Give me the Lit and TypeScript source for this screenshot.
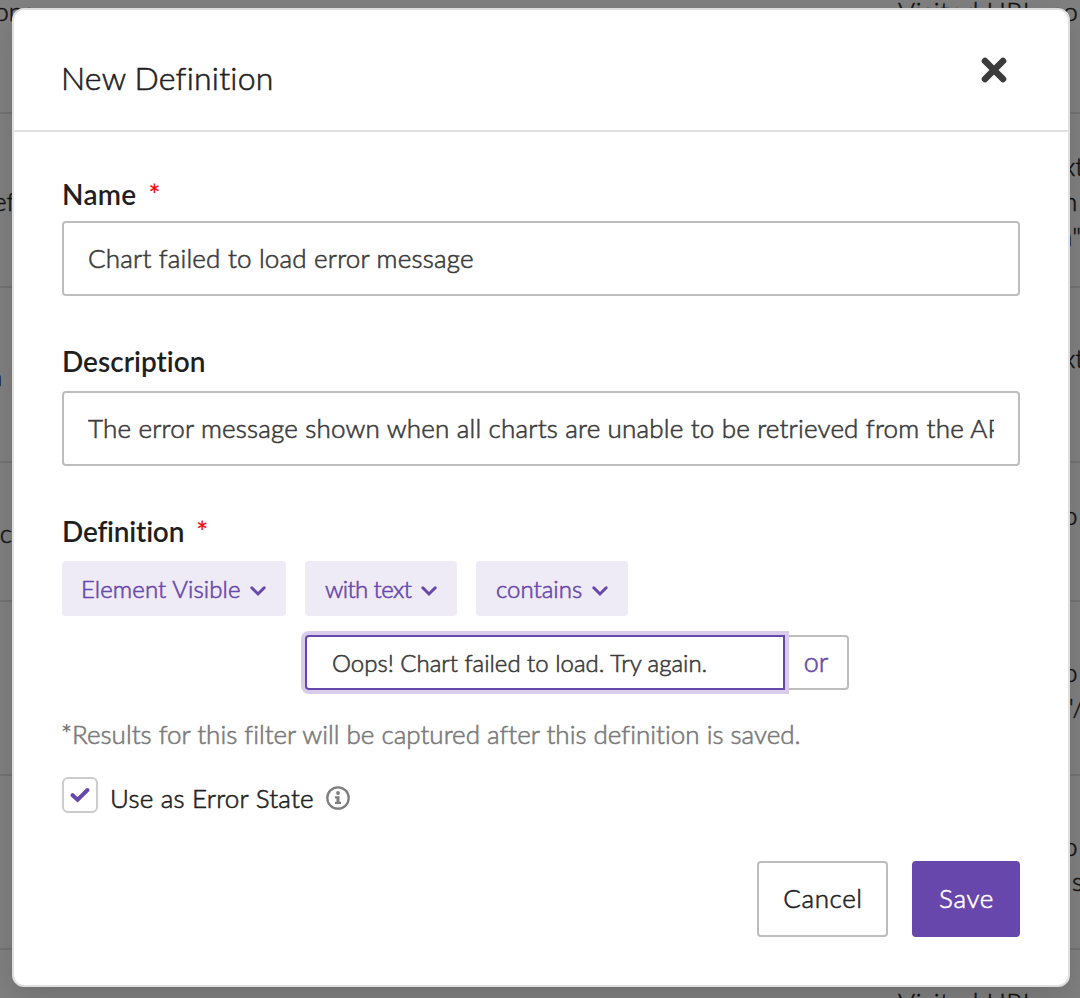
import { LitElement, html, css, svg, nothing } from "lit";
import { customElement, property } from "lit/decorators.js";

interface BackRow {
  size: string;
  left: string;
  right: string[];
}

const BACK_ROWS: BackRow[] = [
  { size: "first", left: "ons", right: ["Visited URL, co"] },
  { size: "tall", left: "ef", right: ["xt", "n", "n\""] },
  { size: "tall", left: "n", right: ["xt", ""] },
  { size: "short", left: "c", right: ["o", ""] },
  { size: "tall", left: "", right: ["o", "\"/"] },
  { size: "tall", left: "", right: ["o", "s"] },
  { size: "last", left: "", right: ["Visited URL"] },
];

const SHIFTS: Record<string, string> = {
  xt: "xt", ef: "ef", n: "n", c: "c", o: "o", "n\"": "quoted", "\"/": "slash", s: "s",
};

const chevron = svg`<path d="M1.8 1.8 8 8 14.2 1.8" />`;

@customElement("backdrop-table")
class BackdropTable extends LitElement {
  static styles = css`
    :host {
      display: block;
      height: 998px;
      overflow: hidden;
      background: #808080;
      color: #111;
      font: 300 26px/35px Lato, sans-serif;
      -webkit-text-stroke: 0.5px;
      white-space: nowrap;
    }
    .row {
      box-sizing: border-box;
      display: grid;
      grid-template-columns: 34px 1fr;
      align-items: center;
      padding-top: 3px;
      border-bottom: 2px solid #737373;
    }
    .first { height: 114px; align-items: start; padding-top: 0; line-height: 23px; }
    .tall { height: 174px; }
    .row:nth-child(3) { height: 175px; }
    .short { height: 139px; }
    .last { height: 60px; align-items: start; padding-top: 35px; border: 0; }
    .left { display: flex; justify-content: flex-end; }
    .right { padding-left: 1032px; }
    .right div { min-height: 35px; }
    .first .right div { min-height: 0; }
    .first .right, .last .right { padding-left: 864px; letter-spacing: 0.65px; }
    .tall .left { justify-content: flex-start; }
    .left .n { margin-left: -12px; }
    .ef { margin-left: -7px; }
    .c { margin-right: 22px; }
    .o, .right .n, .xt { margin-left: -3px; }
    .quoted { margin-left: -8px; }
    .slash { margin-left: -1px; }
    .s { margin-left: 6px; }
  `;

  render() {
    return BACK_ROWS.map(
      (r) => html`
        <div class="row ${r.size}">
          <div class="left"><span class=${SHIFTS[r.left] ?? ""}>${r.left}</span></div>
          <div class="right">
            ${r.right.map((t) => html`<div class=${SHIFTS[t] ?? ""}>${t}</div>`)}
          </div>
        </div>
      `
    );
  }
}

@customElement("filter-chip")
class FilterChip extends LitElement {
  @property() label = "";

  static styles = css`
    :host {
      box-sizing: border-box;
      display: flex;
      align-items: center;
      justify-content: space-between;
      height: 55px;
      padding: 0 20px 1px 19px;
      border-radius: 4px;
      background: #eeeaf6;
      color: #6847ad;
      font-size: 24px;
      white-space: nowrap;
    }
    svg {
      width: 16px;
      height: 11px;
      margin-top: 6px;
      fill: none;
      stroke: currentColor;
      stroke-width: 3;
      stroke-linecap: round;
    }
  `;

  render() {
    return html`<span>${this.label}</span><svg viewBox="0 0 16 11">${chevron}</svg>`;
  }
}

@customElement("field-label")
class FieldLabel extends LitElement {
  @property() label = "";
  @property({ type: Boolean }) required = false;

  static styles = css`
    :host {
      display: flex;
      gap: 12px;
      font-size: 28px;
      font-weight: 600;
      line-height: 34px;
      color: #1f1f1f;
      -webkit-text-stroke: 0;
    }
    .star { color: #f01010; }
  `;

  render() {
    return html`<span>${this.label}</span>${this.required
        ? html`<span class="star">*</span>`
        : nothing}`;
  }
}

@customElement("app-root")
class AppRoot extends LitElement {
  static styles = css`
    :host {
      display: grid;
      width: 1080px;
      height: 998px;
      overflow: hidden;
      font-family: Lato, sans-serif;
      font-weight: 300;
      font-variant-ligatures: none;
      -webkit-text-stroke: 0.6px;
    }
    backdrop-table, .modal { grid-area: 1 / 1; }
    .modal {
      position: relative;
      box-sizing: border-box;
      width: 1058px;
      height: 979px;
      margin: 8px 0 0 12px;
      border: 2px solid #dfdfdf;
      border-radius: 12px;
      background: #fff;
      box-shadow: 0 10px 30px rgba(0, 0, 0, 0.14);
    }
    .header {
      box-sizing: border-box;
      display: flex;
      justify-content: space-between;
      height: 122px;
      padding: 0 61px 0 47px;
      border-bottom: 2px solid #e0e0e0;
    }
    h1 {
      margin: 0;
      padding-top: 48px;
      font-size: 32px;
      line-height: 40px;
      font-weight: 300;
      letter-spacing: 0.2px;
      color: #1f1f1f;
    }
    .close {
      width: 26px;
      height: 26px;
      margin-top: 47px;
      stroke: #3b3b3b;
      stroke-width: 6.6;
      stroke-linecap: round;
    }
    .body { padding: 0 48px; }
    .name { margin-top: 45px; letter-spacing: 0.3px; }
    input {
      box-sizing: border-box;
      display: block;
      width: 100%;
      height: 75px;
      margin: 0;
      padding: 0 24px 2px;
      border: 2px solid #bdbdbd;
      border-radius: 4px;
      outline: none;
      background: #fff;
      color: #3b3b3b;
      font: 300 26px Lato, sans-serif;
      -webkit-text-stroke: inherit;
      font-variant-ligatures: none;
    }
    .in-name { margin-top: 10px; letter-spacing: 0.19px; }
    .desc { margin-top: 48px; }
    .in-desc { margin-top: 13px; padding-bottom: 1px; letter-spacing: 0.18px; }
    .def { margin-top: 48px; letter-spacing: -0.2px; }
    .chips { display: flex; gap: 19px; margin-top: 13px; }
    .visible { width: 224px; letter-spacing: 0.1px; }
    .with { width: 152px; padding-left: 20px; letter-spacing: -0.6px; }
    .contains { width: 152px; padding-left: 20px; letter-spacing: 0; }
    .value { display: flex; margin: 19px 0 0 243px; }
    .value input {
      position: relative;
      width: 480px;
      height: 55px;
      padding: 0 25px 1px;
      border-color: #6847ad;
      border-radius: 4px 0 0 4px;
      box-shadow: 0 0 0 4px #d8cceb;
      font-size: 24px;
    }
    .or {
      box-sizing: border-box;
      display: flex;
      align-items: center;
      justify-content: center;
      width: 64px;
      height: 55px;
      padding-bottom: 2px;
      border: 2px solid #bdbdbd;
      border-left: 0;
      border-radius: 0 4px 4px 0;
      color: #6847ad;
      font-size: 27px;
    }
    .note {
      margin: 27px 0 0 -1px;
      color: #7a7a7a;
      font-size: 26px;
      line-height: 34px;
      white-space: nowrap;
    }
    .state { display: flex; align-items: flex-start; height: 40px; margin-top: 26px; }
    .box {
      box-sizing: border-box;
      display: grid;
      place-items: center;
      width: 36px;
      height: 36px;
      border: 2px solid #ccc;
      border-radius: 6px;
    }
    .box svg {
      width: 20px;
      height: 16px;
      fill: none;
      stroke: #6847ad;
      stroke-width: 4;
      stroke-linecap: round;
    }
    .state-text {
      width: 216px;
      margin: 4px 0 0 12px;
      color: #1f1f1f;
      font-size: 26px;
      line-height: 34px;
      letter-spacing: 0.2px;
    }
    .info { width: 24px; height: 24px; margin-top: 9px; }
    .footer { display: flex; justify-content: flex-end; gap: 24px; margin-top: 44px; }
    button {
      box-sizing: border-box;
      height: 76px;
      padding: 0 0 2px 1px;
      border: 2px solid #bdbdbd;
      border-radius: 4px;
      background: #fff;
      color: #1f1f1f;
      font: 300 26px Lato, sans-serif;
      letter-spacing: 0.6px;
      -webkit-text-stroke: inherit;
    }
    .cancel { width: 131px; }
    .save { width: 108px; border-color: #6847ad; background: #6847ad; color: #fff; }
  `;

  render() {
    return html`
      <backdrop-table></backdrop-table>
      <div class="modal">
        <div class="header">
          <h1>New Definition</h1>
          <svg class="close" viewBox="0 0 26 26"><path d="M4 4 22 22M22 4 4 22" /></svg>
        </div>
        <div class="body">
          <field-label class="name" label="Name" required></field-label>
          <input class="in-name" value="Chart failed to load error message" />
          <field-label class="desc" label="Description"></field-label>
          <input
            class="in-desc"
            value="The error message shown when all charts are unable to be retrieved from the API"
          />
          <field-label class="def" label="Definition" required></field-label>
          <div class="chips">
            <filter-chip class="visible" label="Element Visible"></filter-chip>
            <filter-chip class="with" label="with text"></filter-chip>
            <filter-chip class="contains" label="contains"></filter-chip>
          </div>
          <div class="value">
            <input value="Oops! Chart failed to load. Try again." />
            <div class="or">or</div>
          </div>
          <p class="note">*Results for this filter will be captured after this definition is saved.</p>
          <div class="state">
            <span class="box">
              <svg viewBox="0 0 20 16"><path d="M2.6 8.2 7.6 12.8 17.4 3" /></svg>
            </span>
            <span class="state-text">Use as Error State</span>
            <svg class="info" viewBox="0 0 24 24" fill="#7f7f7f">
              <circle cx="12" cy="12" r="10.7" fill="none" stroke="#7f7f7f" stroke-width="2.3" />
              <circle cx="12" cy="7" r="1.9" />
              <path d="M9 10.2h4.5v5.6H15V18H9v-2.2h1.5v-3.4H9z" />
            </svg>
          </div>
          <div class="footer">
            <button class="cancel">Cancel</button>
            <button class="save">Save</button>
          </div>
        </div>
      </div>
    `;
  }
}
